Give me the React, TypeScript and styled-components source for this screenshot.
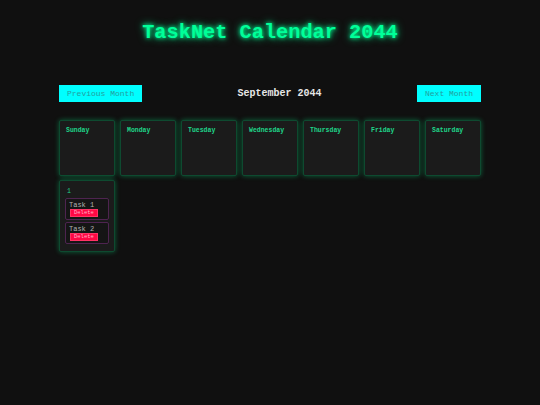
import styled, { createGlobalStyle } from "styled-components";

const GlobalStyle = createGlobalStyle`
    html, body {
        margin: 0;
        padding: 0;
        background: #101010;
        font-family: "Liberation Mono", "Courier New", monospace;
    }
`;

const Page = styled.div`
    min-height: 405px;
    background: #101010;
    overflow: hidden;
`;

const Title = styled.h1`
    margin: 21px 0 0;
    text-align: center;
    font-size: 20.3px;
    line-height: 24px;
    font-weight: bold;
    color: #00ff99;
    text-shadow: 0 0 4px #00ff99, 0 0 9px #00cc77;
`;

const Wrap = styled.div`
    width: 422px;
    margin: 40px auto 0;
`;

const Nav = styled.div`
    display: flex;
    align-items: center;
    justify-content: space-between;
    height: 17px;
`;

const NavButton = styled.button`
    height: 17px;
    padding: 0 8px;
    border: none;
    background: #00ffff;
    color: #239e9e;
    font-family: inherit;
    font-size: 8px;
    cursor: pointer;
`;

const MonthLabel = styled.h2`
    margin: 0;
    font-size: 10px;
    font-weight: bold;
    color: #e6e6e6;
`;

const Grid = styled.div`
    display: grid;
    grid-template-columns: repeat(7, 1fr);
    gap: 4px 5px;
    margin-top: 18px;
`;

const Cell = styled.div<{ $tall?: boolean }>`
    min-height: ${(p) => (p.$tall ? "72px" : "56px")};
    box-sizing: border-box;
    padding: 5px;
    background: #1b1b1b;
    border: 1px solid #0e4a30;
    border-radius: 2px;
    box-shadow: 0 0 5px rgba(0, 255, 140, 0.35);
`;

const DayName = styled.div`
    padding: 1px 1px 0;
    font-size: 6.5px;
    font-weight: bold;
    color: #1fd68a;
`;

const DayNumber = styled.div`
    padding: 2px 2px 0;
    height: 8px;
    font-size: 6.5px;
    color: #1fd68a;
`;

const Task = styled.div`
    margin-top: 2px;
    padding: 2px 3px 2px;
    background: #151515;
    border: 1px solid #4e2450;
    border-radius: 2px;
    font-size: 7px;
    line-height: 8px;
    color: #b0b0b0;
`;

const DeleteButton = styled.button`
    display: block;
    margin: 0 0 0 1px;
    height: 8px;
    padding: 0 3px;
    border: 1px solid #ff3366;
    background: #ff0844;
    color: #ffb3c8;
    font-family: inherit;
    font-size: 5.5px;
    line-height: 6px;
`;

const days = ["Sunday", "Monday", "Tuesday", "Wednesday", "Thursday", "Friday", "Saturday"];
const tasks = ["Task 1", "Task 2"];

export default function App() {
    return (
        <Page>
            <GlobalStyle />
            <Title>TaskNet Calendar 2044</Title>
            <Wrap>
                <Nav>
                    <NavButton>Previous Month</NavButton>
                    <MonthLabel>September 2044</MonthLabel>
                    <NavButton>Next Month</NavButton>
                </Nav>
                <Grid>
                    {days.map((d) => (
                        <Cell key={d}>
                            <DayName>{d}</DayName>
                        </Cell>
                    ))}
                    <Cell $tall>
                        <DayNumber>1</DayNumber>
                        {tasks.map((t) => (
                            <Task key={t}>
                                {t}
                                <DeleteButton>Delete</DeleteButton>
                            </Task>
                        ))}
                    </Cell>
                </Grid>
            </Wrap>
        </Page>
    );
}
